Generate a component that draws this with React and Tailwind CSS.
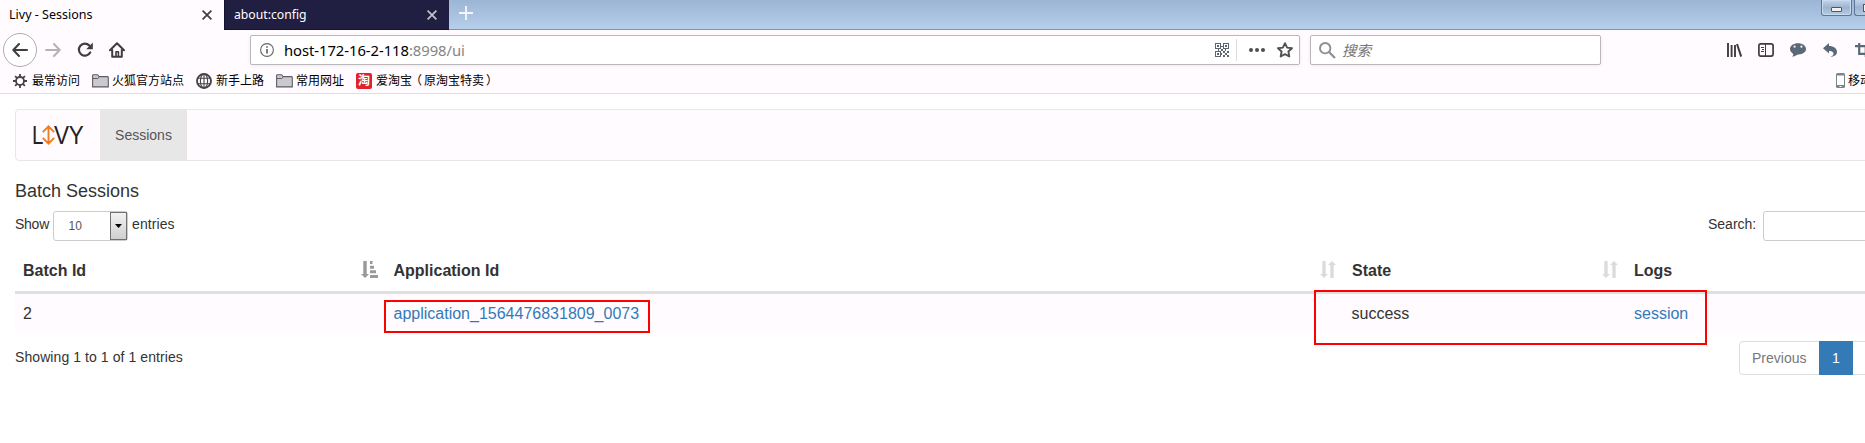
import React from "react";

function Close({ className }) {
  return (
    <svg className={className} width="10" height="10" viewBox="0 0 10 10" fill="none" stroke="currentColor" strokeWidth="1.7">
      <path d="M0.6 0.6L9.4 9.4M9.4 0.6L0.6 9.4" />
    </svg>
  );
}

function Folder() {
  return (
    <svg width="17" height="14" viewBox="0 0 17 14">
      <path d="M0.6 12.9V1.6Q0.6 0.7 1.5 0.7H5.5L7.2 2.6H15.4Q16.3 2.6 16.3 3.5V12.9Z" fill="#c9c9d1" stroke="#5d5d63" strokeWidth="1.1" />
      <path d="M1 4.5H5.8L7.2 3.2" fill="none" stroke="#5d5d63" />
    </svg>
  );
}

function SortBoth() {
  return (
    <svg width="16" height="17" viewBox="0 0 16 17" fill="#dddadd">
      <path d="M2.3 0H5.7V13H8L4 17L0 13H2.3Z" />
      <path d="M10.3 17V4H8L12 0L16 4H13.7V17Z" />
    </svg>
  );
}

function TitleBar() {
  return (
    <div className="flex h-[30px]">
      <div className="flex w-[224px] items-center justify-between bg-[#fffbff] pr-[12px] pl-[9px] text-[12.5px] text-black">
        <span className="leading-none">Livy - Sessions</span>
        <Close className="text-[#3d3d3d]" />
      </div>
      <div className="flex w-[225px] items-center justify-between border-b border-l border-[#12122e] bg-[#211f41] pt-[1px] pr-[12px] pl-[9px] text-[12.2px] text-white">
        <span className="pt-px leading-none">about:config</span>
        <Close className="text-[#c4c4ce]" />
      </div>
      <div className="flex flex-1 items-start justify-between border-b border-[#7b93b5] bg-linear-to-b from-[#9bb6d4] via-[#a9c1e0] to-[#b6d0ec] pl-[10px]">
        <svg className="mt-[6px]" width="14" height="14" viewBox="0 0 14 14" stroke="#f4f8fd" strokeWidth="1.8">
          <path d="M7 0V14M0 7H14" />
        </svg>
        <div className="flex gap-[2px]">
          <div className="flex h-[16px] w-[31px] items-end justify-center rounded-b-[3px] border border-t-0 border-[#5d7699] bg-linear-to-b from-[#c3d4e8] via-[#9db4d0] to-[#b5cbe4] pb-[3px] ring-1 ring-[#c8dbf0] ring-inset">
            <div className="h-[5px] w-[11px] rounded-[1px] border border-[#50565f] bg-[#f3f1ed]" />
          </div>
          <div className="flex h-[16px] w-[11px] items-end justify-end overflow-hidden rounded-bl-[3px] border border-t-0 border-r-0 border-[#5d7699] bg-linear-to-b from-[#c3d4e8] via-[#9db4d0] to-[#b5cbe4] pb-[3px]">
            <div className="h-[8px] w-[2px] border border-r-0 border-[#50565f] bg-[#f3f1ed]" />
          </div>
        </div>
      </div>
    </div>
  );
}

function QrIcon() {
  return (
    <svg width="14" height="14" viewBox="0 0 14 14" fill="#5b6670" shapeRendering="crispEdges">
      <path fillRule="evenodd" d="M0 0H6V6H0ZM1 1V5H5V1ZM8 0H14V6H8ZM9 1V5H13V1ZM0 8H6V14H0ZM1 9V13H5V9Z" />
      <path d="M2 2H4V4H2ZM10 2H12V4H10ZM2 10H4V12H2ZM6 3H8V4H6ZM6 6H8V8H6ZM3 6H4V8H3ZM8 8H10V10H8ZM10 10H12V12H10ZM12 8H14V10H12ZM8 12H10V14H8ZM12 12H14V14H12ZM10 6H11V8H10ZM6 10H7V12H6Z" />
    </svg>
  );
}

function Toolbar() {
  return (
    <div className="flex h-[40px] items-center overflow-hidden">
      <div className="ml-[3px] flex size-[34px] shrink-0 items-center justify-center rounded-full border border-[#b0adb0] bg-white">
        <svg width="16" height="14" viewBox="0 0 16 14" fill="none" stroke="#3e3e42" strokeWidth="2" strokeLinecap="round" strokeLinejoin="round">
          <path d="M15 7H1.5M7 1L1.3 7L7 13" />
        </svg>
      </div>
      <svg className="ml-[8px] shrink-0" width="16" height="14" viewBox="0 0 16 14" fill="none" stroke="#b5b2b6" strokeWidth="2" strokeLinecap="round" strokeLinejoin="round">
        <path d="M1 7H14.5M9 1L14.7 7L9 13" />
      </svg>
      <svg className="ml-[16px] shrink-0" width="17" height="16" viewBox="0 0 17 16" fill="none" stroke="#3e3e42" strokeWidth="2.2">
        <path d="M12.3 3.6A6 6 0 1 0 13.2 10.5" strokeLinecap="round" />
        <path d="M15.8 0.5V7.2H9.2Z" fill="#3e3e42" stroke="none" />
      </svg>
      <svg className="ml-[15px] shrink-0" width="16" height="16" viewBox="0 0 16 16" fill="none" stroke="#3e3e42" strokeWidth="2" strokeLinejoin="round" strokeLinecap="round">
        <path d="M1 8.2L8 1.2L15 8.2M3.2 8V14.8H12.8V8" />
        <path d="M7 14V9.8H9.4V14" strokeWidth="1.6" />
      </svg>
      <div className="ml-[125px] flex h-[30px] w-[1050px] shrink-0 items-center rounded-[2px] border border-[#b9b7ba] bg-white pl-[9px] shadow-[0_1px_4px_rgba(0,0,0,0.07)]">
        <svg width="14" height="14" viewBox="0 0 14 14" fill="none" stroke="#66666a">
          <circle cx="7" cy="7" r="6.4" strokeWidth="1.1" />
          <path d="M7 6V10.6M7 3.2V4.8" strokeWidth="1.7" />
        </svg>
        <span className="ml-[10px] w-[925px] text-[14.8px] leading-none tracking-[-0.05px] whitespace-nowrap text-black">
          host-172-16-2-118<span className="text-[#858585]">:8998/ui</span>
        </span>
        <span className="ml-[6px]"><QrIcon /></span>
        <div className="ml-[7px] h-[22px] w-px bg-[#dcdadd]" />
        <svg className="ml-[12px]" width="16" height="4" viewBox="0 0 16 4" fill="#4e4e52">
          <circle cx="2" cy="2" r="2" /><circle cx="8" cy="2" r="2" /><circle cx="14" cy="2" r="2" />
        </svg>
        <svg className="ml-[12px]" width="16" height="16" viewBox="0 0 16 16" fill="none" stroke="#525256" strokeWidth="1.9" strokeLinejoin="round">
          <path d="M8 1.2L10.1 5.6L15 6.2L11.4 9.5L12.3 14.5L8 12.1L3.7 14.5L4.6 9.5L1 6.2L5.9 5.6Z" />
        </svg>
      </div>
      <div className="ml-[10px] flex h-[30px] w-[291px] shrink-0 items-center rounded-[2px] border border-[#b9b7ba] bg-white pl-[8px] shadow-[0_1px_4px_rgba(0,0,0,0.07)]">
        <svg width="17" height="17" viewBox="0 0 17 17" fill="none" stroke="#8e8e91" strokeWidth="1.9">
          <circle cx="6.2" cy="6.2" r="5.2" /><path d="M10 10L16 16" strokeWidth="2.2" />
        </svg>
        <span className="ml-[6px] text-[14.5px] leading-none text-[#757575] italic">搜索</span>
      </div>
      <svg className="ml-[126px] shrink-0" width="15" height="14" viewBox="0 0 15 14" fill="none" stroke="#3e3e42" strokeWidth="2">
        <path d="M1 0V14M4.6 2V14M8 2V14" strokeWidth="1.9" /><path d="M10 1L14.2 13.6" />
      </svg>
      <svg className="ml-[16px] shrink-0" width="16" height="14" viewBox="0 0 16 14" fill="none" stroke="#3e3e42">
        <rect x="0.9" y="0.9" width="14.2" height="12.2" rx="2" strokeWidth="1.7" /><path d="M7.5 1V13" strokeWidth="1" /><path d="M3 4.5H6M4 6.5H6M3 8.5H6" strokeWidth="1" />
      </svg>
      <svg className="ml-[16px] shrink-0" width="16" height="14" viewBox="0 0 16 14">
        <path d="M8 0.3C12.5 0.3 16 2.6 16 6C16 9.2 12.6 11.3 8.6 11.4C6.8 11.5 5.4 13 2.2 13.7C3.4 12.4 3.4 11.4 2.8 10.5C1 9.4 0 7.9 0 6C0 2.6 3.5 0.3 8 0.3Z" fill="#5a6977" />
        <circle cx="4.6" cy="3.7" r="1.1" fill="#f5f1f5" /><circle cx="11.4" cy="3.7" r="1.1" fill="#f5f1f5" />
      </svg>
      <svg className="ml-[17px] shrink-0" width="14" height="14" viewBox="0 0 14 14" fill="#5a6977">
        <path d="M6 0V3C10.8 3 14 5.6 14 9C14 11.5 12 13.5 7.5 14C9.8 12.8 11 11.6 10.4 10C9.8 8.5 8.3 8 6 8V10.6L0 5.3Z" />
      </svg>
      <svg className="ml-[18px] shrink-0" width="14" height="14" viewBox="0 0 14 14" fill="none" stroke="#5a6977" strokeWidth="2.2">
        <path d="M4.2 0V10.8H14M0 3.2H10.8V14" />
      </svg>
    </div>
  );
}

function Bookmarks() {
  return (
    <div className="flex h-[24px] items-center border-b border-[#e2dfe3] pb-[2px] text-[12px] leading-none whitespace-nowrap text-black">
      <div className="flex w-[79px] shrink-0 items-center gap-[5px] pl-[13px]">
        <svg className="shrink-0" width="14" height="14" viewBox="0 0 14 14" fill="none" stroke="#454549">
          <circle cx="7" cy="7" r="4" strokeWidth="1.8" />
          <path d="M7 0V3M7 11V14M0 7H3M11 7H14M2.1 2.1L4.2 4.2M9.8 9.8L11.9 11.9M11.9 2.1L9.8 4.2M4.2 9.8L2.1 11.9" strokeWidth="1.8" />
        </svg>
        <span>最常访问</span>
      </div>
      <div className="ml-[13px] flex items-center gap-[3px]"><Folder /><span>火狐官方站点</span></div>
      <div className="ml-[12px] flex items-center gap-[4px]">
        <svg width="16" height="16" viewBox="0 0 16 16" fill="none" stroke="#454549">
          <circle cx="8" cy="8" r="7" strokeWidth="1.9" />
          <ellipse cx="8" cy="8" rx="3.6" ry="7" strokeWidth="1.1" /><path d="M8 1V15M1.8 5.3H14.2M1.8 10.7H14.2" strokeWidth="1.1" />
        </svg>
        <span>新手上路</span>
      </div>
      <div className="ml-[12px] flex items-center gap-[3px]"><Folder /><span>常用网址</span></div>
      <div className="ml-[12px] flex items-center gap-[4px]">
        <span className="flex size-[16px] items-center justify-center rounded-[2px] bg-[#e1222a] text-[12px] font-bold text-white">淘</span>
        <span>爱淘宝<span className="relative left-[-2px]">（</span>原淘宝特卖<span className="relative left-[2px]">）</span></span>
      </div>
      <div className="ml-auto flex w-[29px] shrink-0 items-center gap-[3px] overflow-hidden">
        <svg className="shrink-0" width="9" height="15" viewBox="0 0 9 15">
          <rect width="9" height="15" rx="1.5" fill="#7b858e" /><rect x="1" y="2.5" width="7" height="9.5" fill="#fff" /><rect x="3.5" y="13" width="2" height="1" fill="#fff" />
        </svg>
        <span>移动</span>
      </div>
    </div>
  );
}

function Logo() {
  return (
    <div className="flex items-center text-[25px] leading-none text-[#222]">
      <span className="inline-block w-[10px] origin-left scale-x-[0.82]">L</span>
      <svg className="-mr-[1px]" width="13" height="20" viewBox="0 0 13 20" fill="none" stroke="#f47a20" strokeWidth="1.9">
        <path d="M6.5 1V19M0.8 7.2L6.5 1.4L12.2 7.2M0.8 12.8L6.5 18.6L12.2 12.8" />
      </svg>
      <span className="inline-block w-[29px] origin-left scale-x-[0.9] tracking-[-0.4px]">VY</span>
    </div>
  );
}

const cols = "grid grid-cols-[370.5px_958px_282px_1fr]";

function Table() {
  return (
    <div className="w-[1850px] text-[16px] leading-[22px]">
      <div className={cols + " h-[53px] border-b-[3px] border-[#dfdfdf] pt-[19px] font-bold"}>
        <div className="flex justify-between pr-[8px] pl-[8px]">
          Batch Id
          <svg className="mt-[1px]" width="17" height="17" viewBox="0 0 17 17" fill="#9b989d">
            <path d="M2.3 0H5.7V13H8L4 17L0 13H2.3ZM9 0H11.5V3H9ZM9 4.7H13V7.7H9ZM9 9.3H15V12.3H9ZM9 14H17V17H9Z" />
          </svg>
        </div>
        <div className="flex justify-between pr-[8px] pl-[8px]">Application Id<span className="mt-[1px]"><SortBoth /></span></div>
        <div className="flex justify-between pr-[8px] pl-[8.5px]">State<span className="mt-[1px]"><SortBoth /></span></div>
        <div className="pl-[8.5px]">Logs</div>
      </div>
      <div className={cols + " h-[39px] bg-[#fffbff] pt-[9px]"}>
        <div className="pl-[8px]">2</div>
        <div className="pl-[8px] text-[#337ab7]">application_1564476831809_0073</div>
        <div className="pl-[8px]">success</div>
        <div className="pl-[8.5px] text-[#337ab7]">session</div>
      </div>
    </div>
  );
}

export default function App() {
  return (
    <div className="relative h-[443px] w-[1865px] overflow-hidden bg-white text-[#333]">
      <header className="bg-[#fffbff] font-['Noto_Sans','Noto_Sans_CJK_SC',sans-serif]">
        <TitleBar />
        <Toolbar />
        <Bookmarks />
      </header>
      <main className="pl-[15px] font-['Liberation_Sans',Arial,sans-serif] text-[14px] leading-[20px]">
        <nav className="mt-[15px] flex h-[52px] w-[1870px] items-stretch rounded-[4px] border border-[#e7e7e7] bg-[#fffbff]">
          <div className="flex w-[84px] items-center pl-[16px]"><Logo /></div>
          <div className="flex w-[87px] items-center justify-center bg-[#e7e7e7] text-[#555]">Sessions</div>
        </nav>
        <h4 className="mt-[20px] text-[18px] leading-[20px]">Batch Sessions</h4>
        <div className="mt-[10px] flex h-[30px] w-[1900px]">
          <div className="flex w-[1693px] items-start">
            <span className="mt-[3px] w-[38px] tracking-[-0.25px]">Show</span>
            <div className="flex h-[30px] w-[75px] rounded-[3px] border border-[#ccc] bg-white text-[12px] text-[#555]">
              <span className="w-[56px] pt-[5px] pl-[14.5px] leading-[18px]">10</span>
              <span className="flex flex-1 items-center justify-center border border-[#707070] bg-linear-to-b from-[#f2f2f2] to-[#cfcfcf]">
                <svg width="7" height="4" viewBox="0 0 7 4" fill="#000"><path d="M0 0H7L3.5 4Z" /></svg>
              </span>
            </div>
            <span className="mt-[3px] ml-[4px] tracking-[0.1px]">entries</span>
          </div>
          <span className="mt-[3px] w-[55px]">Search:</span>
          <div className="h-[30px] w-[150px] rounded-[3px] border border-[#ccc] bg-white" />
        </div>
        <Table />
        <div className="flex w-[1900px]">
          <div className="w-[1724px] pt-[14px] tracking-[0.08px]">Showing 1 to 1 of 1 entries</div>
          <div className="mt-[8px] flex h-[34px] rounded-l-[4px] border border-[#ddd] leading-[32px]">
            <span className="w-[79px] pl-[12px] text-[#777]">Previous</span>
            <span className="-my-px h-[34px] w-[34px] bg-[#337ab7] text-center leading-[34px] text-white">1</span>
            <span className="w-[57px]" />
          </div>
        </div>
      </main>
      <div className="absolute top-[300px] left-[384px] h-[33px] w-[266px] border-2 border-[#fe0000]" />
      <div className="absolute top-[290px] left-[1314px] h-[55px] w-[393px] border-2 border-[#fe0000]" />
    </div>
  );
}
